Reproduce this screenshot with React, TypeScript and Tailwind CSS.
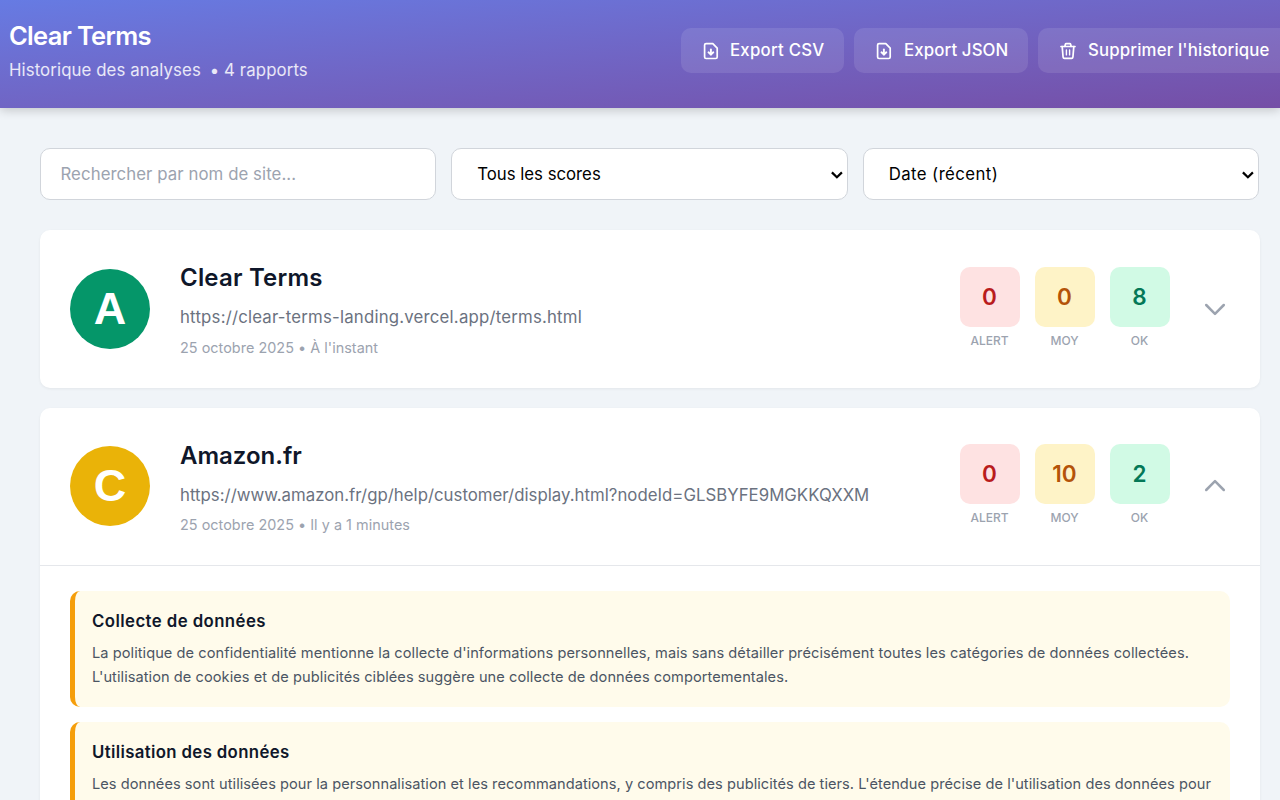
import type { ReactNode } from 'react';

function FileIcon() {
  return (
    <svg className="h-5 w-5 shrink-0" viewBox="0 0 20 20" fill="none" stroke="currentColor" strokeWidth="1.7" strokeLinecap="round" strokeLinejoin="round">
      <path d="M5.1 2.6H11.8l4.4 4.6v8.8a1.5 1.5 0 0 1-1.5 1.5H5.1a1.5 1.5 0 0 1-1.5-1.5V4.1a1.5 1.5 0 0 1 1.5-1.5Z" />
      <path d="M9.9 8.4v5" strokeWidth="1.9" />
      <path d="M7.5 11.3l2.4 2.3 2.4-2.3" strokeWidth="1.9" />
    </svg>
  );
}

function TrashIcon() {
  return (
    <svg className="h-5 w-5 shrink-0" viewBox="0 0 20 20" fill="none" stroke="currentColor" strokeWidth="1.7" strokeLinecap="round" strokeLinejoin="round">
      <path d="M3 5.5h14" />
      <path d="M6.9 5.3l.5-2.1c.1-.4.4-.6.8-.6h3.6c.4 0 .7.2.8.6l.5 2.1" />
      <path d="M4.2 5.6l.9 10.6c.1.7.6 1.2 1.3 1.2h7.2c.7 0 1.2-.5 1.3-1.2l.9-10.6" />
      <path d="M8.4 9v4.9M11.6 9v4.9" strokeWidth="1.4" />
    </svg>
  );
}

function HeaderButton({ icon, children }: { icon: ReactNode; children: ReactNode }) {
  return (
    <button className="flex h-[45px] shrink-0 items-center gap-[9px] rounded-[10px] bg-white/10 px-5 text-[16.8px] font-medium whitespace-nowrap">
      {icon}
      {children}
    </button>
  );
}

function Select({ label, tracking }: { label: string; tracking: string }) {
  return (
    <div className="grid">
      <select className={`col-start-1 row-start-1 h-[52px] w-full appearance-none rounded-[10px] border border-[#d1d5db] bg-white pt-[2px] pl-[25px] text-[16.8px] text-black ${tracking}`}>
        <option>{label}</option>
      </select>
      <svg className="pointer-events-none col-start-1 row-start-1 mt-px mr-[5px] h-3 w-3 self-center justify-self-end" viewBox="0 0 12 12" fill="none" stroke="#000" strokeWidth="2.2">
        <path d="M0.9 3.4l5 4.9 5-4.9" />
      </svg>
    </div>
  );
}

function Stat({ value, label, tone }: { value: number; label: string; tone: string }) {
  return (
    <div className="flex w-[60px] flex-col items-center">
      <div className={`flex h-[60px] w-[60px] items-center justify-center rounded-[10px] pr-px text-[22.5px] font-semibold ${tone}`}>{value}</div>
      <div className="mt-[5px] pr-px text-[12px] leading-[18px] font-medium text-[#9ca3af]">{label}</div>
    </div>
  );
}

type Report = {
  grade: string;
  color: string;
  title: string;
  url: string;
  urlClass: string;
  titleClass: string;
  date: string;
  stats: [number, number, number];
  open?: boolean;
  children?: ReactNode;
};

function ReportCard({ grade, color, title, titleClass, url, urlClass, date, stats, open, children }: Report) {
  return (
    <article className="rounded-[10px] bg-white shadow-[0_1px_3px_rgba(0,0,0,0.06)]">
      <div className={`flex items-center px-[30px] ${open ? 'h-[157px]' : 'h-[158px]'}`}>
        <div className={`mr-[30px] flex h-20 w-20 shrink-0 items-center justify-center rounded-full font-['Liberation_Sans',sans-serif] text-[45px] font-bold text-white ${color} ${open ? 'mb-px' : ''}`}>
          {grade}
        </div>
        <div className="min-w-0 flex-1 whitespace-nowrap">
          <h2 className={`text-[24px] leading-[36px] font-semibold text-[#0f172a] ${titleClass}`}>{title}</h2>
          <p className={`mt-[8px] text-[16.8px] leading-[26px] text-[#6b7280] ${urlClass}`}>{url}</p>
          <p className={`text-[14.4px] leading-[23px] tracking-[0.034px] text-[#9ca3af] ${open ? 'mt-[5px]' : 'mt-[6px]'}`}>{date}</p>
        </div>
        <div className="mr-[30px] mb-[2px] flex gap-[15px]">
          <Stat value={stats[0]} label="ALERT" tone="bg-[#fee2e2] text-[#b91c1c]" />
          <Stat value={stats[1]} label="MOY" tone="bg-[#fef3c7] text-[#b45309]" />
          <Stat value={stats[2]} label="OK" tone="bg-[#d1fae5] text-[#047857]" />
        </div>
        <svg className={`h-[30px] w-[30px] text-[#9ca3af] ${open ? 'mb-px rotate-180' : ''}`} viewBox="0 0 30 30" fill="none" stroke="currentColor" strokeWidth="2.5" strokeLinecap="round" strokeLinejoin="round">
          <path d="M6.2 11l8.8 8.8 8.8-8.8" />
        </svg>
      </div>
      {children}
    </article>
  );
}

function Section({ title, titleClass, textClass, lines }: { title: string; titleClass: string; textClass: string; lines: string[] }) {
  return (
    <section className="h-[116px] rounded-[10px] border-l-[5px] border-[#f59e0b] bg-[#fffbeb] pt-[17px] pl-[17px] whitespace-nowrap">
      <h3 className={`text-[16.8px] leading-[26px] font-semibold text-[#0f172a] ${titleClass}`}>{title}</h3>
      <div className={`mt-[7px] text-[14.6px] leading-[24px] text-[#4b5563] ${textClass}`}>
        {lines.map((line) => (
          <p key={line}>{line}</p>
        ))}
      </div>
    </section>
  );
}

export default function App() {
  return (
    <div className="flex h-screen flex-col overflow-hidden bg-[#f0f4f8] font-['Inter',sans-serif]">
      <header className="z-10 flex h-[108px] shrink-0 items-start justify-between bg-linear-to-br from-[#667be3] to-[#754ea6] pl-[9px] text-white shadow-[0_2px_10px_rgba(0,0,0,0.2)]">
        <div className="pt-[18px] whitespace-nowrap">
          <h1 className="text-[25.5px] leading-[36px] font-semibold tracking-[-0.68px]">Clear Terms</h1>
          <p className="mt-[3px] text-[16.8px] leading-[26px] tracking-[0.1px] text-white/85">
            Historique des analyses <span className="ml-1">• 4 rapports</span>
          </p>
        </div>
        <div className="-mr-[10px] flex gap-[10px] pt-7">
          <HeaderButton icon={<FileIcon />}><span className="w-[94px] text-left tracking-[0.25px]">Export CSV</span></HeaderButton>
          <HeaderButton icon={<FileIcon />}><span className="w-[105px] pl-px text-left tracking-[0.13px]">Export JSON</span></HeaderButton>
          <HeaderButton icon={<TrashIcon />}><span className="w-[183px] pl-px text-left tracking-[0.16px]">Supprimer l'historique</span></HeaderButton>
        </div>
      </header>
      <main className="flex w-[1260px] flex-col pt-10 pl-10">
        <div className="grid grid-cols-3 gap-[15px] pr-px">
          <input
            className="h-[52px] w-full rounded-[10px] border border-[#d1d5db] bg-white px-[19.5px] text-[16.8px] tracking-[0.07px] placeholder:text-[#9ca3af]"
            placeholder="Rechercher par nom de site..."
          />
          <Select label="Tous les scores" tracking="tracking-[-0.02px]" />
          <Select label="Date (récent)" tracking="tracking-[0.42px]" />
        </div>
        <div className="mt-[30px] flex flex-col gap-5">
          <ReportCard
            grade="A"
            color="bg-[#059669]"
            title="Clear Terms"
            titleClass="tracking-[0.2px]"
            url="https://clear-terms-landing.vercel.app/terms.html"
            urlClass="tracking-[0.2px]"
            date="25 octobre 2025 • À l'instant"
            stats={[0, 0, 8]}
          />
          <ReportCard
            grade="C"
            color="bg-[#eab308]"
            title="Amazon.fr"
            titleClass="tracking-normal"
            url="https://www.amazon.fr/gp/help/customer/display.html?nodeId=GLSBYFE9MGKKQXXM"
            urlClass="tracking-[0.018px]"
            date="25 octobre 2025 • Il y a 1 minutes"
            stats={[0, 10, 2]}
            open
          >
            <div className="flex flex-col gap-[15px] border-t border-[#e5e7eb] px-[30px] pt-[25px]">
              <Section
                title="Collecte de données"
                titleClass="tracking-[0.42px]"
                textClass="tracking-[0.062px]"
                lines={[
                  "La politique de confidentialité mentionne la collecte d'informations personnelles, mais sans détailler précisément toutes les catégories de données collectées.",
                  "L'utilisation de cookies et de publicités ciblées suggère une collecte de données comportementales.",
                ]}
              />
              <Section
                title="Utilisation des données"
                titleClass="tracking-[0.35px]"
                textClass="tracking-[0.046px]"
                lines={[
                  "Les données sont utilisées pour la personnalisation et les recommandations, y compris des publicités de tiers. L'étendue précise de l'utilisation des données pour",
                ]}
              />
            </div>
          </ReportCard>
        </div>
      </main>
    </div>
  );
}
